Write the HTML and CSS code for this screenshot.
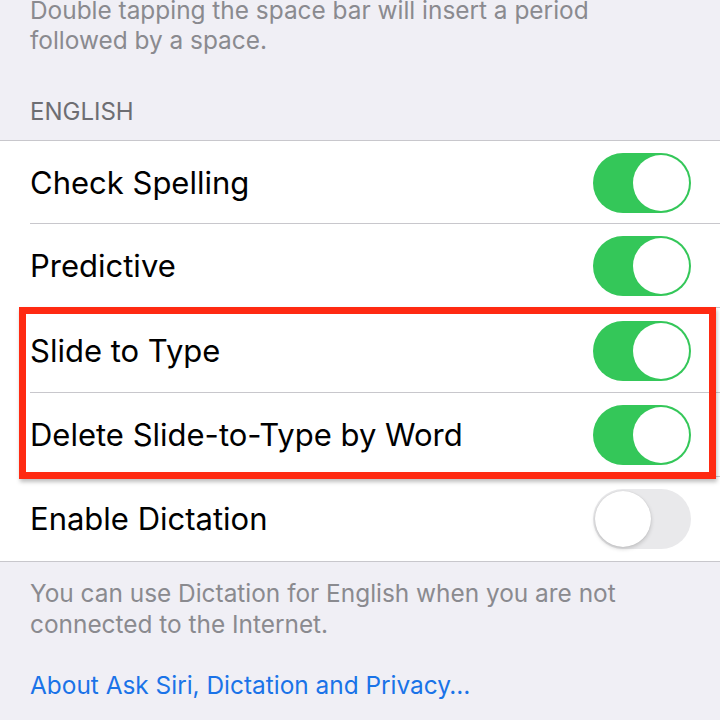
FILE: index.html
```html
<!DOCTYPE html>
<html>
<head>
    <title>Keyboards</title>
    <link rel="stylesheet" href="styles.css">
</head>
<body>
    <div class="page">
        <p class="note">Double tapping the space bar will insert a period followed by a space.</p>

        <div class="section-header">ENGLISH</div>

        <div class="list">
            <div class="row">
                <span class="label">Check Spelling</span>
                <span class="switch on"><span class="knob"></span></span>
            </div>
            <div class="row">
                <span class="label">Predictive</span>
                <span class="switch on"><span class="knob"></span></span>
            </div>
            <div class="highlight">
                <div class="row tall">
                    <span class="label">Slide to Type</span>
                    <span class="switch on"><span class="knob"></span></span>
                </div>
                <div class="row">
                    <span class="label">Delete Slide-to-Type by Word</span>
                    <span class="switch on"><span class="knob"></span></span>
                </div>
            </div>
            <div class="row last">
                <span class="label">Enable Dictation</span>
                <span class="switch"><span class="knob"></span></span>
            </div>
        </div>

        <p class="footer">You can use Dictation for English when you are not connected to the Internet.</p>

        <a class="link" href="#">About Ask Siri, Dictation and Privacy…</a>
    </div>
</body>
</html>
```

FILE: styles.css
```css
body {
    margin: 0;
    background-color: #f0eff5;
    font-family: Inter, "Noto Sans", sans-serif;
    overflow: hidden;
}

.page {
    width: 720px;
    height: 720px;
    overflow: hidden;
}

.note {
    margin: -5px 0 0 0;
    padding: 0 30px;
    width: 600px;
    font-size: 24.4px;
    line-height: 30px;
    color: #8a8a8f;
}

.section-header {
    padding: 42px 30px 13px;
    font-size: 24px;
    line-height: 30px;
    color: #6d6d72;
}

.list {
    background-color: #ffffff;
    border-top: 1px solid #c8c7cc;
    border-bottom: 1px solid #c8c7cc;
}

.row {
    position: relative;
    display: flex;
    align-items: center;
    justify-content: space-between;
    height: 84px;
    padding: 0 29px 0 30px;
}

.row:first-child {
    height: 83px;
}

.row.tall {
    height: 85px;
}

.row::after {
    content: "";
    position: absolute;
    left: 30px;
    right: 0;
    bottom: 0;
    height: 1px;
    background-color: #c8c7cc;
}

.row.last::after {
    display: none;
}

.label {
    font-size: 31px;
    color: #000000;
    padding-bottom: 1px;
}

.switch {
    position: relative;
    width: 98px;
    height: 60px;
    border-radius: 30px;
    background-color: #e9e9eb;
    box-sizing: border-box;
}

.switch .knob {
    position: absolute;
    top: 2px;
    left: 2px;
    width: 56px;
    height: 56px;
    border-radius: 50%;
    background-color: #ffffff;
    box-shadow: 0 2px 4px rgba(0, 0, 0, 0.18), 0 0 1px rgba(0, 0, 0, 0.15);
}

.switch.on {
    background-color: #34c759;
}

.switch.on .knob {
    left: 40px;
    box-shadow: none;
}

.highlight {
    position: relative;
}

.highlight::after {
    content: "";
    position: absolute;
    left: 19px;
    right: 4px;
    top: -1px;
    bottom: -2px;
    border: 7px solid #ff2a12;
    box-shadow: 1px 3px 4px rgba(0, 0, 0, 0.25);
    pointer-events: none;
}

.footer {
    margin: 0;
    padding: 16px 30px 0;
    width: 610px;
    font-size: 24.4px;
    line-height: 31px;
    color: #8a8a8f;
}

.link {
    display: block;
    margin-top: 30px;
    padding: 0 30px;
    font-size: 24.4px;
    line-height: 31px;
    color: #1a73e8;
    text-decoration: none;
}
```
